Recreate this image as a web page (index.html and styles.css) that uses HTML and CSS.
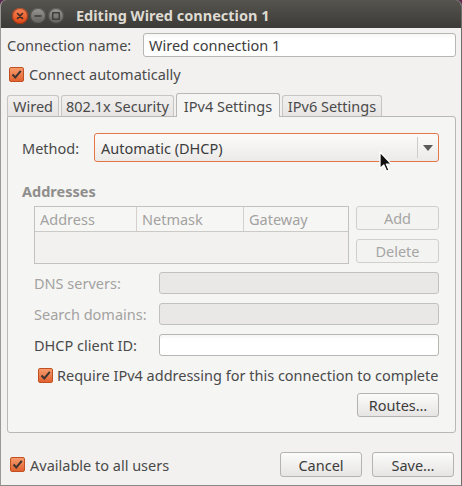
FILE: index.html
```html
<!DOCTYPE html>
<html>
<head>
<meta charset="utf-8">
<link rel="stylesheet" href="styles.css">
</head>
<body>
<div class="window">
  <div class="titlebar">
    <div class="wbtns">
      <span class="wb close"><svg width="16" height="16" viewBox="0 0 16 16"><path d="M5.5 5.5L10.5 10.5M10.5 5.5L5.5 10.5" stroke="#3a2a22" stroke-width="1.6" stroke-linecap="round"/></svg></span>
      <span class="wb"><svg width="16" height="16" viewBox="0 0 16 16"><path d="M4.5 8H11.5" stroke="#3c3b37" stroke-width="1.6"/></svg></span>
      <span class="wb"><svg width="16" height="16" viewBox="0 0 16 16"><rect x="4.8" y="4.8" width="6.4" height="6.4" fill="none" stroke="#3c3b37" stroke-width="1.4"/></svg></span>
    </div>
    <div class="title">Editing Wired connection 1</div>
  </div>
  <div class="content">
    <div class="name-row">
      <span class="name-label">Connection name:</span>
      <div class="entry grow">Wired connection 1</div>
    </div>
    <div class="check-row auto-row">
      <span class="check"><svg width="15" height="15" viewBox="0 0 15 15"><path d="M3.5 7.5L6.3 10.5L11.8 3.8" fill="none" stroke="#3d3530" stroke-width="2"/></svg></span>
      <span>Connect automatically</span>
    </div>
    <div class="notebook">
      <div class="tabs">
        <div class="tab tab-wired">Wired</div>
        <div class="tab tab-sec">802.1x Security</div>
        <div class="tab active tab-v4">IPv4 Settings</div>
        <div class="tab tab-v6">IPv6 Settings</div>
      </div>
      <div class="panel">
        <div class="method-row">
          <span class="method-label">Method:</span>
          <div class="combo">
            <span class="combo-text">Automatic (DHCP)</span>
            <span class="combo-sep"></span>
            <span class="combo-arrow"></span>
          </div>
        </div>
        <div class="section-title">Addresses</div>
        <div class="addr-block">
          <div class="table">
            <div class="thead">
              <div class="th c1">Address</div>
              <div class="th c2">Netmask</div>
              <div class="th c3">Gateway</div>
            </div>
            <div class="tbody"></div>
          </div>
          <div class="side-btns">
            <div class="btn disabled">Add</div>
            <div class="btn disabled">Delete</div>
          </div>
        </div>
        <div class="field-row first-field">
          <span class="field-label dim">DNS servers:</span>
          <div class="entry dis grow small"></div>
        </div>
        <div class="field-row">
          <span class="field-label dim">Search domains:</span>
          <div class="entry dis grow small"></div>
        </div>
        <div class="field-row">
          <span class="field-label">DHCP client ID:</span>
          <div class="entry grow small"></div>
        </div>
        <div class="check-row req-row">
          <span class="check"><svg width="15" height="15" viewBox="0 0 15 15"><path d="M3.5 7.5L6.3 10.5L11.8 3.8" fill="none" stroke="#3d3530" stroke-width="2"/></svg></span>
          <span class="nowrap">Require IPv4 addressing for this connection to complete</span>
        </div>
        <div class="routes-row">
          <div class="btn">Routes…</div>
        </div>
      </div>
    </div>
    <div class="footer">
      <div class="check-row foot-check">
        <span class="check"><svg width="15" height="15" viewBox="0 0 15 15"><path d="M3.5 7.5L6.3 10.5L11.8 3.8" fill="none" stroke="#3d3530" stroke-width="2"/></svg></span>
        <span>Available to all users</span>
      </div>
      <div class="foot-btns">
        <div class="btn cancel">Cancel</div>
        <div class="btn save">Save…</div>
      </div>
    </div>
  </div>
  <svg class="cursor" width="15" height="22" viewBox="0 0 15 22"><path d="M1 1V17.5L4.8 14L7.6 20.3L10.1 19.2L7.4 13.2H12.6L1 1Z" fill="#111" stroke="#fff" stroke-width="1.3" stroke-linejoin="round"/></svg>
</div>
</body>
</html>
```
FILE: styles.css
```css
* { box-sizing: border-box; }
html, body { margin: 0; padding: 0; }
body {
  background: #5b2a4e;
  width: 462px;
  height: 486px;
  overflow: hidden;
  font-family: "Noto Sans", "DejaVu Sans", sans-serif;
  font-size: 14.5px;
  color: #4a4a4a;
}
.window {
  position: relative;
  width: 462px;
  height: 486px;
  background: #f2f1f0;
  border-radius: 6px 6px 0 0;
  border-left: 1px solid #9a9996;
  border-right: 1px solid #6e6d6a;
  border-bottom: 1px solid #8a8986;
  overflow: hidden;
}
.titlebar {
  height: 28px;
  background: linear-gradient(#55544f, #3c3b37);
  display: flex;
  align-items: center;
  padding-left: 11px;
}
.wbtns { display: flex; gap: 2px; margin-top: 3px; }
.wb {
  width: 16px; height: 16px; border-radius: 50%;
  background: linear-gradient(#9a9994, #5e5d59);
  box-shadow: inset 0 0 0 1px rgba(40,40,38,0.55);
  display: flex;
}
.wb.close { background: linear-gradient(#f8865a, #dc4614); box-shadow: inset 0 0 0 1px rgba(120,40,10,0.6); }
.title {
  margin-left: 12px;
  color: #dfdbd2;
  font-weight: bold;
  font-size: 14.5px;
  margin-top: 1px;
}
.content {
  padding: 5px 5px 0 6px;
}
.name-row { display: flex; align-items: center; height: 24px; }
.name-label { width: 136px; }
.grow { flex: 1; }
.nowrap { white-space: nowrap; }
.entry {
  height: 24px;
  border: 1px solid #b7b6b3;
  border-radius: 3px;
  background: linear-gradient(#f6f6f6, #ffffff 5px);
  padding-left: 5px;
  display: flex; align-items: center;
  color: #3c3c3c;
}
.entry.small { height: 22px; }
.entry.dis { background: #e9e8e7; border-color: #c2c1be; }
.check-row { display: flex; align-items: center; height: 16px; }
.check {
  width: 15px; height: 15px;
  border: 1px solid #c0501f;
  border-radius: 2px;
  background: linear-gradient(#f79a6c, #e2622f);
  display: flex; align-items: center; justify-content: center;
  margin-right: 5px;
  flex: none;
}
.check svg { display: block; margin: -1px; }
.auto-row { margin-top: 9px; padding-left: 2px; }
.notebook { margin-top: 11px; }
.tabs { display: flex; align-items: flex-end; height: 23px; gap: 2px; position: relative; z-index: 1; }
.tab {
  height: 21px;
  border: 1px solid #c6c5c2;
  border-bottom: none;
  border-radius: 3px 3px 0 0;
  background: linear-gradient(#f1f0ef, #e6e5e3);
  display: flex; align-items: center; justify-content: center;
  color: #4a4a4a;
}
.tab.active {
  height: 24px;
  margin-bottom: -1px;
  background: #f5f5f4;
  border-color: #b9b8b5;
}
.tab-wired { width: 52px; }
.tab-sec { width: 113px; }
.tab-v4 { width: 104px; }
.tab-v6 { width: 100px; }
.panel {
  height: 317px;
  border: 1px solid #b9b8b5;
  border-radius: 0 3px 3px 3px;
  background: #f5f5f4;
  padding: 16px 16px 0 14px;
}
.method-row { display: flex; align-items: center; height: 29px; }
.method-label { width: 72px; }
.combo {
  flex: 1;
  height: 29px;
  border: 1px solid #e5764a;
  border-radius: 3px;
  background: linear-gradient(#fbfbfa, #ebeae8);
  display: flex; align-items: center;
  padding-left: 6px;
  color: #3c3c3c;
}
.combo-text { flex: 1; }
.combo-sep { width: 1px; height: 21px; background: #cfcdca; margin-right: 5px; }
.combo-arrow {
  width: 0; height: 0;
  border-left: 5px solid transparent;
  border-right: 5px solid transparent;
  border-top: 6px solid #5a5a5a;
  margin-right: 5px;
}
.section-title {
  margin-top: 20px;
  height: 18px;
  line-height: 18px;
  font-weight: bold;
  color: #8f8e8c;
}
.addr-block { display: flex; margin-top: 6px; margin-left: 12px; }
.table {
  width: 315px;
  height: 58px;
  border: 1px solid #c3c2bf;
  background: #f2f1f0;
}
.thead { display: flex; height: 25px; border-bottom: 1px solid #cbcac7; background: #f6f6f5; }
.th { display: flex; align-items: center; padding-left: 5px; color: #a3a2a0; }
.c1 { width: 102px; border-right: 1px solid #d2d1ce; }
.c2 { width: 107px; border-right: 1px solid #d2d1ce; }
.c3 { flex: 1; }
.side-btns { display: flex; flex-direction: column; gap: 9px; margin-left: 7px; flex: 1; }
.btn {
  height: 24px;
  border: 1px solid #b4b3b0;
  border-radius: 3px;
  background: linear-gradient(#fbfbfb, #e6e5e3);
  display: flex; align-items: center; justify-content: center;
  color: #3c3c3c;
}
.btn.disabled { background: #f3f3f2; border-color: #d0cfcc; color: #a6a5a3; }
.field-row { display: flex; align-items: center; margin-left: 12px; height: 22px; margin-top: 9px; }
.field-row.first-field { margin-top: 8px; }
.field-label { width: 125px; }
.dim { color: #a3a2a0; }
.req-row { margin-top: 11px; margin-left: 16px; }
.req-row .check { margin-right: 4px; }
.routes-row { display: flex; justify-content: flex-end; margin-top: 10px; }
.routes-row .btn { width: 82px; }
.footer { display: flex; align-items: center; justify-content: space-between; margin-top: 19px; height: 25px; padding-right: 2px; }
.foot-check { padding-left: 3px; }
.foot-btns { display: flex; gap: 10px; }
.foot-btns .btn { height: 25px; width: 82px; }
.cursor { position: absolute; left: 378px; top: 151px; }
```
